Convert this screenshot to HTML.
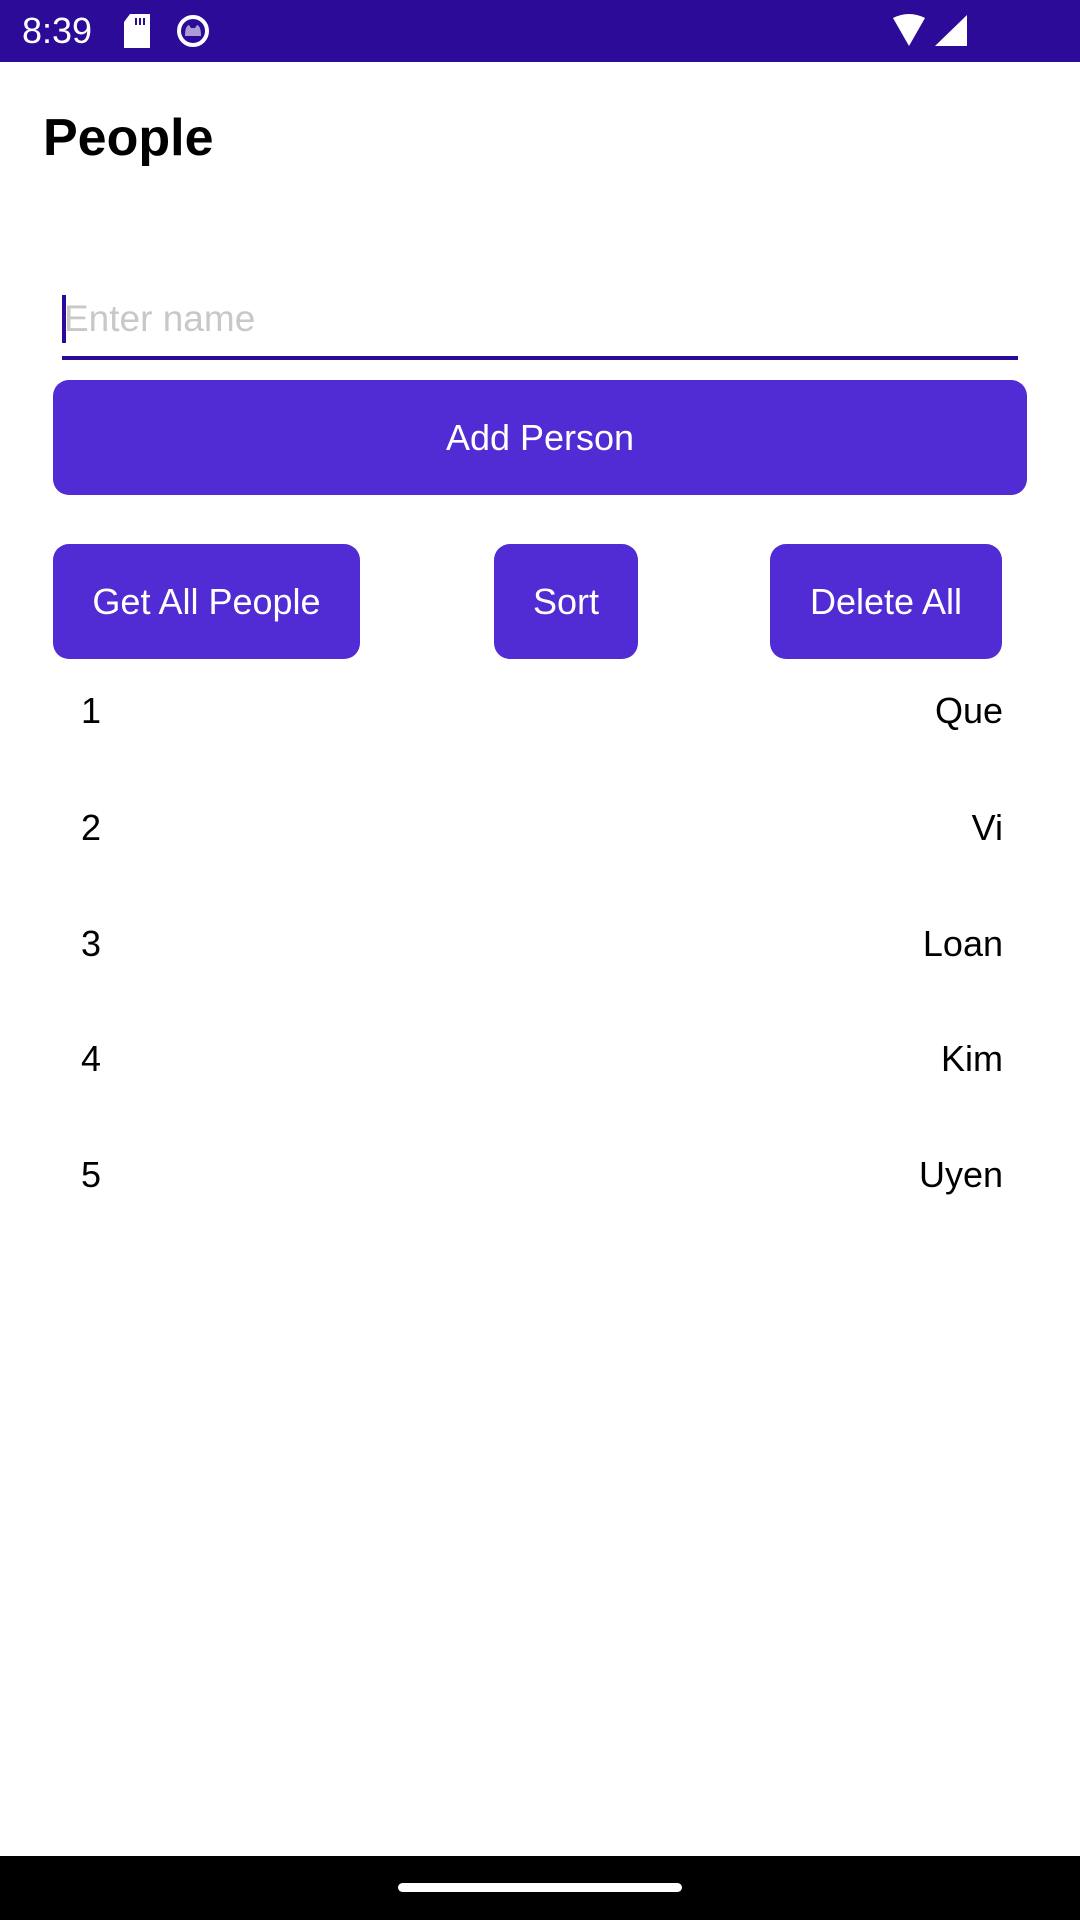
<!DOCTYPE html>
<html><head><meta charset="utf-8"><style>
body{margin:0;width:1080px;height:1920px;position:relative;background:#fff;font-family:"Liberation Sans",sans-serif;overflow:hidden}
.a{position:absolute}
.btn{position:absolute;background:#512BD4;border-radius:16px;color:#fff;font-size:36px;display:flex;align-items:center;justify-content:center}
.n{position:absolute;font-size:36px;color:#000;line-height:40px}
</style></head><body>
<div class="a" style="left:0;top:0;width:1080px;height:62px;background:#2B0B98"></div>
<div class="a" style="left:22px;top:10px;color:#fff;font-size:36px;line-height:42px">8:39</div>
<svg class="a" style="left:122px;top:14px" width="30" height="34" viewBox="0 0 30 34"><path d="M8 0H28V34H2V8Z" fill="#fff"/><rect x="13" y="4" width="2" height="7" fill="#2B0B98"/><rect x="17" y="4" width="2" height="7" fill="#2B0B98"/><rect x="21" y="4" width="2" height="7" fill="#2B0B98"/></svg>
<svg class="a" style="left:176px;top:14px" width="34" height="34" viewBox="0 0 34 34"><circle cx="17" cy="17" r="14" fill="#2B0B98" stroke="#fff" stroke-width="4"/><path d="M9 22Q9 12 13 11L15 14H19L21 11Q25 12 25 22Z" fill="#fff" opacity=".6"/></svg>
<svg class="a" style="left:890px;top:14px" width="80" height="34" viewBox="0 0 80 34"><path d="M3 4Q19 -4 35 4L19 32Z" fill="#fff"/><path d="M77 1V32H45Z" fill="#fff"/></svg>
<div class="a" style="left:43px;top:108px;font-size:52px;font-weight:bold;line-height:60px">People</div>
<div class="a" style="left:62px;top:295px;width:4px;height:48px;background:#2B0B98"></div>
<div class="a" style="left:64px;top:296px;font-size:37px;color:#c8c8c8;line-height:46px">Enter name</div>
<div class="a" style="left:62px;top:356px;width:956px;height:4px;background:#2B0B98"></div>
<div class="btn" style="left:53px;top:380px;width:974px;height:115px">Add Person</div>
<div class="btn" style="left:53px;top:544px;width:307px;height:115px">Get All People</div>
<div class="btn" style="left:494px;top:544px;width:144px;height:115px">Sort</div>
<div class="btn" style="left:770px;top:544px;width:232px;height:115px">Delete All</div>
<div class="n" style="left:81px;top:691px">1</div><div class="n" style="right:77px;top:691px">Que</div>
<div class="n" style="left:81px;top:808px">2</div><div class="n" style="right:77px;top:808px">Vi</div>
<div class="n" style="left:81px;top:924px">3</div><div class="n" style="right:77px;top:924px">Loan</div>
<div class="n" style="left:81px;top:1039px">4</div><div class="n" style="right:77px;top:1039px">Kim</div>
<div class="n" style="left:81px;top:1155px">5</div><div class="n" style="right:77px;top:1155px">Uyen</div>
<div class="a" style="left:0;top:1856px;width:1080px;height:64px;background:#000"></div>
<div class="a" style="left:398px;top:1883px;width:284px;height:9px;border-radius:5px;background:#fff"></div>
</body></html>
